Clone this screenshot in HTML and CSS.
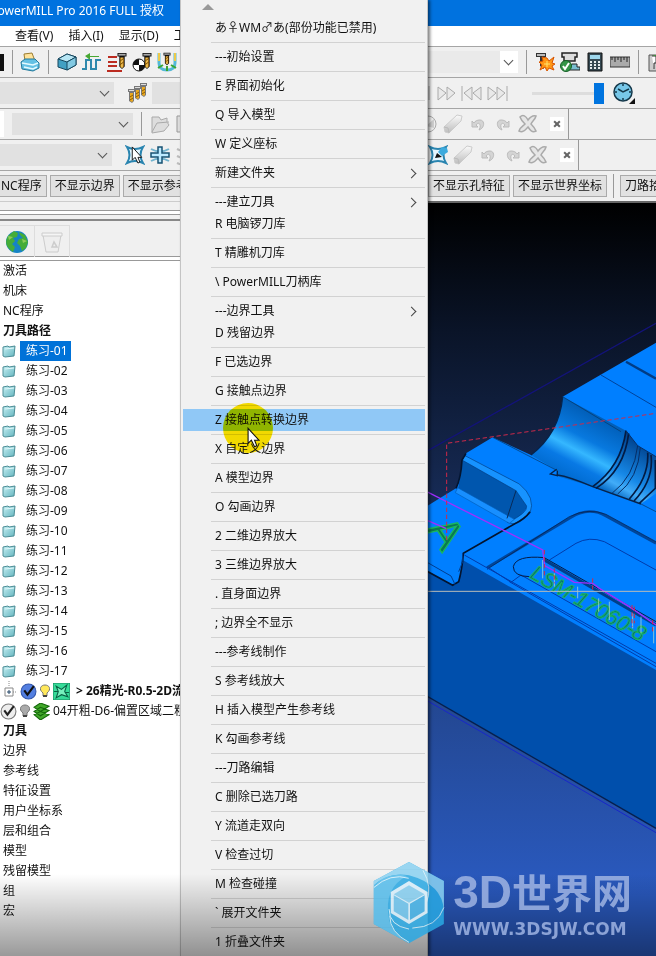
FILE: index.html
```html
<!DOCTYPE html>
<html lang="zh-CN">
<head>
<meta charset="UTF-8">
<meta name="viewport" content="width=device-width, initial-scale=1.0">
<title>PowerMILL Pro 2016 FULL</title>
<link rel="stylesheet" href="styles.css">
</head>
<body>
<!-- shared icons -->
<svg class="defs" aria-hidden="true">
    <defs>
        <linearGradient id="gold" x1="0" x2="1" y1="0" y2="0"><stop offset="0" stop-color="#b87800"/><stop offset=".5" stop-color="#ffd468"/><stop offset="1" stop-color="#a86400"/></linearGradient>
        <linearGradient id="cyan" x1="0" x2="1" y1="0" y2="1"><stop offset="0" stop-color="#c8f0f4"/><stop offset="1" stop-color="#62b4be"/></linearGradient>
        <linearGradient id="steel" x1="0" x2="0" y1="0" y2="1"><stop offset="0" stop-color="#fafafa"/><stop offset="1" stop-color="#bdbdbd"/></linearGradient>
        <symbol id="drill" viewBox="0 0 12 20"><path d="M1 1h10v4H9v11l-3 3-3-3V5H1z" fill="#111"/><path d="M2 2h8v2H2z" fill="#aaa"/><path d="M4 6h4v10l-2 2-2-2z" fill="url(#gold)"/><path d="M4 10l4-3M4 14l4-3" stroke="#6b4300"/></symbol>
        <symbol id="drill-small" viewBox="0 0 9 14"><path d="M1 0h7v3H7v9l-2 2-3-2V3H1z" fill="#777"/><path d="M2 1h5v1H2z" fill="#ddd"/><path d="M3 4h3v8l-1 1-2-1z" fill="#e9a820"/><path d="M3 8l3-2M3 11l3-2" stroke="#8b5b00"/></symbol>
        <symbol id="folder" viewBox="0 0 14 14"><path d="M1 3l5-1 1 1 6-1-1 10-9 1-2-1z" fill="url(#cyan)" stroke="#4c8d96"/><path d="M3 5l9-1" stroke="#dff8fa"/></symbol>
        <symbol id="eraser" viewBox="0 0 20 20"><path d="M1 13L14 1l5 1-1 5L6 19l-4-1z" fill="url(#steel)" stroke="#ccc"/><path d="M1 13l4 1 1 5" fill="none" stroke="#bbb"/></symbol>
        <symbol id="undo" viewBox="0 0 14 14"><path d="M1 4v6h6L5 8c3-4 6 0 3 5 6-2 6-10 1-10-3 0-5 1-6 3z" fill="#d4d4d4" stroke="#bbb"/></symbol>
        <symbol id="cross" viewBox="0 0 20 20"><path d="M2 3c3-3 6-1 8 3 3-4 5-5 8-4-1 4-4 5-5 8 2 2 4 4 5 7-4 2-6-1-8-4-3 3-5 6-9 4 1-4 4-5 6-7-2-2-4-4-5-7z" fill="#e6e6e6" stroke="#aaa" stroke-width="1.5"/></symbol>
        <symbol id="star" viewBox="0 0 20 20"><path d="M2 2q8 4 16 0-5 8 0 16-8-4-16 0 5-8 0-16z" fill="#e4f6ff" stroke="#2a85b0" stroke-width="2"/></symbol>
        <symbol id="bulb" viewBox="0 0 10 14"><path d="M3 9C-2 5 1 1 5 1s7 4 2 8v3H3z" stroke="#777"/><path d="M3 12h4" stroke="#444" stroke-width="2"/></symbol>
        <symbol id="arrow" viewBox="0 0 12 19"><path d="M1 1v14l3-3 3 6 2-1-2-5h4z" fill="#fff" stroke="#111"/></symbol>
    </defs>
</svg>

<div class="app">
    <header class="title-bar"><span class="title">PowerMILL Pro 2016 FULL 授权</span></header>

    <nav class="menu-bar">
        <a href="#">查看(V)</a>
        <a href="#">插入(I)</a>
        <a href="#">显示(D)</a>
        <a href="#">工具(T)</a>
    </nav>

    <div class="toolbar">
        <div class="tools left">
            <span class="swatch"></span>
            <span class="divider print-divider"></span>
            <svg class="icon" viewBox="0 0 20 20"><path d="M5 9L4 2l8-1 3 8z" fill="#ffe39a" stroke="#9c7d31"/><path d="M1 10l4-3h10l4 4v5l-6 3-11-2z" fill="#65c1e4" stroke="#23799b"/><path d="M2 11l11 2 5-2M4 15l9 2 4-2" fill="none" stroke="#e5faff" stroke-width="1.5"/></svg>
            <span class="divider"></span>
            <svg class="icon" viewBox="0 0 20 20"><path d="M1 7l9-5 9 3v8l-9 5-9-3z" fill="#42a0c3" stroke="#17475e"/><path d="M1 7l9-5 9 3-9 5z" fill="#b7e6f4" stroke="#17475e"/><path d="M10 10v8l9-5V5z" fill="#82c9e2" stroke="#17475e"/></svg>
            <svg class="icon" viewBox="0 0 20 20"><path d="M0 17h4V8h5v9h5V8h5" fill="none" stroke="#2e88ac" stroke-width="2"/><path d="M17 4H8V1L3 4l5 4V5h9z" fill="#48a733"/></svg>
            <svg class="icon" viewBox="0 0 20 20"><path d="M1 5h9M1 10h9M1 14h9M0 19h15" stroke="#bb2b20" stroke-width="2"/><use href="#drill" x="9" width="12" height="18"/></svg>
            <svg class="icon" viewBox="0 0 20 20"><circle cx="7" cy="13" r="6" fill="#fff" stroke="#111"/><path d="M7 7v6H1a6 6 0 0 1 6-6zM7 13h6a6 6 0 0 1-6 6z" fill="#111"/><use href="#drill" x="9" width="12" height="18"/></svg>
            <svg class="icon" viewBox="0 0 20 20"><path d="M2 1v10q0 7 8 7t8-7V1" fill="none" stroke="#54b9d6" stroke-width="3"/><path d="M1 16l5-3M19 16l-5-3M10 14v5" stroke="#3da631" stroke-width="2"/><path d="M2 1v8M18 1v8" stroke="#edc94b" stroke-width="2"/><use href="#drill" x="4" width="12" height="14"/></svg>
        </div>
        <div class="tools right">
            <span class="combo wide"><select aria-label="刀具"></select></span>
            <span class="divider"></span>
            <svg class="icon" viewBox="0 0 20 20"><path d="M1 1h10v4H9v12l-4-3V5H1z" fill="#333"/><path d="M2 2h8v2H2z" fill="#bbb"/><path d="M12 6l2 3 5-4-2 6 3 1-3 2 2 4-5-2-2 3-2-4-5 3 2-5-3-3 4-1-1-4z" fill="#ff9817" stroke="#d85400"/><path d="M12 9v6M9 12h6" stroke="#ffe36e"/></svg>
            <svg class="icon" viewBox="0 0 20 20"><path d="M2 1h15v4h-2v4H4V5H2z" fill="#ddd" stroke="#222" stroke-width="1.5"/><path d="M12 12h5v3h3v3H8z" fill="#7abed0" stroke="#222"/><circle cx="6" cy="14" r="5.5" fill="#349447" stroke="#166127"/><path d="M3 14l2 3 4-6" fill="none" stroke="#fff" stroke-width="2"/></svg>
            <svg class="icon" viewBox="0 0 20 20"><path d="M3 1h14v18H3z" fill="#354852" stroke="#111"/><path d="M5 3h10v4H5z" fill="#9ed7ec"/><path d="M5 10h10M5 13h10M5 16h10" stroke="#e7edef" stroke-width="2" stroke-dasharray="2 2"/></svg>
            <svg class="icon" viewBox="0 0 20 20"><path d="M0 5h20v10H0z" fill="#aaa" stroke="#333"/><path d="M2 5v3M5 5v5M8 5v3M11 5v5M14 5v3M17 5v5" stroke="#222"/></svg>
            <span class="divider"></span>
            <svg class="icon" viewBox="0 0 20 20"><path d="M2 3h9v16H2z" fill="#ccc" stroke="#555"/><path d="M5 4h4v7H7v6" fill="#fff" stroke="#333"/><path d="M5 3h8V0l7 4-7 4V5" fill="#3ba132"/></svg>
        </div>
    </div>

    <div class="toolbar">
        <div class="tools left">
            <span class="combo simulate"><select aria-label="刀具路径"></select></span>
            <svg class="icon multi" viewBox="0 0 20 20"><use href="#drill-small" y="6" width="9" height="14"/><use href="#drill-small" x="6" y="3" width="9" height="14"/><use href="#drill-small" x="12" width="9" height="14"/></svg>
            <span class="combo fill"><select aria-label="模式"></select></span>
        </div>
        <div class="tools right">
            <svg class="playback" viewBox="0 0 80 20" fill="#e9e9e9" stroke="#aaa"><path d="M1 3v14M10 4v13l8-7zM19 4v13l8-7zM34 3v15M44 4v13l-8-7zM53 4v13l-8-7zM60 4v13l8-7zM69 4v13l8-7zM79 3v15"/></svg>
            <input class="speed" type="range" value="100" aria-label="仿真速度">
            <svg class="icon clock" viewBox="0 0 22 22"><circle cx="10" cy="10" r="9" fill="#77c7e8" stroke="#15384a" stroke-width="1.5"/><path d="M5 7l5 3 6-3M10 2v2M10 16v2M2 10h2M16 10h2" fill="none" stroke="#15384a" stroke-width="1.5"/><path d="M22 16v6h-6z" fill="#111"/></svg>
        </div>
    </div>

    <div class="toolbar">
        <div class="tools left">
            <span class="white-edge"></span>
            <span class="combo boundary"><select aria-label="边界"></select></span>
            <span class="divider"></span>
            <svg class="icon" viewBox="0 0 20 20" fill="#ddd" stroke="#aaa"><path d="M2 3h7l2 3 6-2v4l2 3-5 6-12 2z"/><path d="M2 18l5-9 12-1"/></svg>
            <svg class="icon" viewBox="0 0 20 20" fill="#ddd" stroke="#999"><path d="M2 2h16v16H2zM6 2v16"/></svg>
        </div>
        <div class="tools right edit-bar">
            <svg class="icon half" viewBox="10 0 10 20"><circle cx="10" cy="10" r="8" fill="#eee" stroke="#aaa"/><path d="M8 12l8-7v9z" fill="#ccc"/></svg>
            <svg class="icon"><use href="#eraser"/></svg>
            <svg class="icon turn"><use href="#undo"/></svg>
            <svg class="icon turn redo"><use href="#undo"/></svg>
            <svg class="icon"><use href="#cross"/></svg>
            <button class="close" aria-label="关闭"></button>
        </div>
    </div>

    <div class="toolbar">
        <div class="tools left">
            <span class="combo pattern"><select aria-label="参考线"></select></span>
            <svg class="icon" viewBox="0 0 20 20"><use href="#star" width="20" height="20"/><use href="#arrow" x="6" y="1" width="12" height="18"/></svg>
            <svg class="icon" viewBox="0 0 20 20"><path d="M1 4q9 5 18 0M1 16q9-5 18 0" fill="none" stroke="#71b3ce" stroke-width="2"/><path d="M8 2h4v6h7v4h-7v6H8v-6H1V8h7z" fill="#bdeaff" stroke="#175273" stroke-width="1.5"/></svg>
            <svg class="icon" viewBox="0 0 20 20" fill="none" stroke="#bbb" stroke-width="2"><path d="M2 4q8 4 18 0M2 11q8 4 18 0M2 18q8 4 18 0"/></svg>
        </div>
        <div class="tools right edit-bar">
            <svg class="icon" viewBox="0 0 20 20"><use href="#star" width="20" height="20"/><path d="M7 13l2-5 5 4z" fill="#111"/><path d="M10 7l4-5 5 1 1 4-6 4z" fill="#3caadd"/></svg>
            <svg class="icon"><use href="#eraser"/></svg>
            <svg class="icon turn"><use href="#undo"/></svg>
            <svg class="icon turn redo"><use href="#undo"/></svg>
            <svg class="icon"><use href="#cross"/></svg>
            <button class="close" aria-label="关闭"></button>
        </div>
    </div>

    <div class="toolbar macros">
        <div class="tools left">
            <button class="macro">NC程序</button>
            <button class="macro">不显示边界</button>
            <button class="macro">不显示参考线</button>
        </div>
        <div class="tools right">
            <button class="macro">不显示孔特征</button>
            <button class="macro">不显示世界坐标</button>
            <span class="divider"></span>
            <button class="macro">刀路拾取</button>
        </div>
    </div>

    <main class="workspace">
        <aside class="explorer">
            <div class="grip"></div>
            <div class="tabs">
                <button class="tab" aria-label="浏览器"><svg viewBox="0 0 24 24"><circle cx="12" cy="12" r="11" fill="#1683c5"/><path d="M3 6l6-5 4 2-1 4-4 1 2 3-3 3 3 3-2 5C0 17 0 11 3 6zM14 2l6 3 3 7-2 6-4 3-2-5-3-3 2-4 4-1-3-3z" fill="#45ad38"/><path d="M3 6l5 1-4 3zM17 9l5 2-4 2z" fill="#8ccd58"/></svg></button>
                <button class="tab" aria-label="回收站"><svg viewBox="0 0 24 24"><path d="M3 5l3 17h12l3-17z" fill="#eee" stroke="#ccc"/><path d="M2 3h20v3H2z" fill="#f5f5f5" stroke="#ccc"/><path d="M12 17l2-5 3 5z" fill="none" stroke="#ccc" stroke-width="1.5"/></svg></button>
            </div>
            <ul class="tree">
                <li>激活</li>
                <li>机床</li>
                <li>NC程序</li>
                <li class="bold">刀具路径</li>
                <li class="folder"><svg><use href="#folder"/></svg><span class="selected">练习-01</span></li>
                <li class="folder"><svg><use href="#folder"/></svg><span>练习-02</span></li>
                <li class="folder"><svg><use href="#folder"/></svg><span>练习-03</span></li>
                <li class="folder"><svg><use href="#folder"/></svg><span>练习-04</span></li>
                <li class="folder"><svg><use href="#folder"/></svg><span>练习-05</span></li>
                <li class="folder"><svg><use href="#folder"/></svg><span>练习-06</span></li>
                <li class="folder"><svg><use href="#folder"/></svg><span>练习-07</span></li>
                <li class="folder"><svg><use href="#folder"/></svg><span>练习-08</span></li>
                <li class="folder"><svg><use href="#folder"/></svg><span>练习-09</span></li>
                <li class="folder"><svg><use href="#folder"/></svg><span>练习-10</span></li>
                <li class="folder"><svg><use href="#folder"/></svg><span>练习-11</span></li>
                <li class="folder"><svg><use href="#folder"/></svg><span>练习-12</span></li>
                <li class="folder"><svg><use href="#folder"/></svg><span>练习-13</span></li>
                <li class="folder"><svg><use href="#folder"/></svg><span>练习-14</span></li>
                <li class="folder"><svg><use href="#folder"/></svg><span>练习-15</span></li>
                <li class="folder"><svg><use href="#folder"/></svg><span>练习-16</span></li>
                <li class="folder"><svg><use href="#folder"/></svg><span>练习-17</span></li>
                <li class="path active">
                    <svg class="expand" viewBox="0 0 13 20"><path d="M5 0v6M9 11h4" stroke="#888" stroke-dasharray="1 1"/><path d="M1 7h8v8H1z" fill="#fff" stroke="#888"/><path d="M3 11h4M5 9v4" stroke="#246"/></svg>
                    <svg class="state" viewBox="0 0 16 16"><circle cx="8" cy="8" r="7" fill="#537fe1" stroke="#3156ac"/><path d="M4 7l3 4 6-8" fill="none" stroke="#111" stroke-width="2"/></svg>
                    <svg class="bulb" fill="#ffe85b"><use href="#bulb"/></svg>
                    <svg class="state" viewBox="0 0 16 16"><path d="M0 0h16v16H0z" fill="#36db99" stroke="#17885f"/><path d="M3 3l5 3 5-4-2 6 3 5-6-2-5 3 2-6zM1 8h4M11 9h4" fill="#76f0bd" stroke="#075f43"/></svg>
                    <span class="bold">&gt; 26精光-R0.5-2D流道</span>
                </li>
                <li class="path">
                    <svg class="state" viewBox="0 0 16 16"><circle cx="8" cy="8" r="7" fill="#eee" stroke="#777"/><path d="M4 7l3 4 6-8" fill="none" stroke="#222" stroke-width="2"/></svg>
                    <svg class="bulb" fill="#aaa"><use href="#bulb"/></svg>
                    <svg class="state" viewBox="0 0 16 16" fill="#42a82a" stroke="#14680b"><path d="M1 11l6-3 8 3-8 5zM1 8l6-4 8 3-8 5zM1 4l6-4 8 3-8 5z"/></svg>
                    <span>04开粗-D6-偏置区域二粗</span>
                </li>
                <li class="bold">刀具</li>
                <li>边界</li>
                <li>参考线</li>
                <li>特征设置</li>
                <li>用户坐标系</li>
                <li>层和组合</li>
                <li>模型</li>
                <li>残留模型</li>
                <li>组</li>
                <li>宏</li>
            </ul>
        </aside>

        <section class="view">
            <svg class="model" viewBox="6 -381 684 2259" preserveAspectRatio="xMinYMin slice">
                <defs>
                    <linearGradient id="bore" gradientUnits="userSpaceOnUse" x1="500" y1="240" x2="400" y2="430"><stop offset="0" stop-color="#005bb4"/><stop offset=".4" stop-color="#0879df"/><stop offset=".6" stop-color="#35b7ff"/><stop offset=".78" stop-color="#0879e5"/><stop offset="1" stop-color="#006bd0"/></linearGradient>
                    <linearGradient id="ring" gradientUnits="userSpaceOnUse" x1="670" y1="350" x2="580" y2="510"><stop offset="0" stop-color="#00418c"/><stop offset=".6" stop-color="#1688e7"/><stop offset=".8" stop-color="#42acf8"/><stop offset="1" stop-color="#0063c0"/></linearGradient>
                </defs>
                <path d="M0 365L690-20" stroke="#13137a" stroke-width="4"/>
                <!-- side wall -->
                <path d="M0 700L110 670 690 1000V1495L0 1097z" fill="#004fac"/>
                <path d="M0 1097L690 1495" stroke="#06204e" stroke-width="4"/>
                <path d="M0 1110L690 1508" stroke="#1827c9" stroke-width="3"/>
                <!-- top face -->
                <path d="M0 530L90 475Q105 445 108 390L120 370 200 322 315 375Q400 310 410 200L690 38V1020L110 690Q104 720 98 755L80 766 0 722z" fill="#007fff"/>
                <path d="M108 385L270 470Q300 500 302 535L265 577 240 572 96 480Q106 430 108 385z" fill="#0056ae"/>
                <path d="M115 376L280 462Q330 503 312 550L265 582 244 577Q305 550 302 528L270 482 108 390z" fill="#1793ff" stroke="#003d80" stroke-width="2"/>
                <path d="M95 473L265 568 250 580 88 488z" fill="#188fff" stroke="#005dba" stroke-width="2"/>
                <path d="M270 482L243 565" stroke="#082b57" stroke-width="3"/>
                <path d="M90 475Q105 445 108 390L120 370M312 545Q297 567 265 582L112 670Q108 720 98 755L80 766 0 722" fill="none" stroke="#03142f" stroke-width="5"/>
                <path d="M0 695L75 738 88 765M110 670V695L98 725" fill="none" stroke="#003e91" stroke-width="3"/>
                <!-- runner bore -->
                <path d="M315 375Q400 310 410 200L600 302Q585 410 500 470L390 437 394 422z" fill="url(#bore)"/>
                <path d="M600 302L635 347 690 380V490L645 522 500 470Q580 410 600 302z" fill="url(#ring)"/>
                <path d="M315 375Q400 310 410 200M394 422V437L373 432 392 418M394 435Q430 440 500 470L645 522" fill="none" stroke="#06234b" stroke-width="4"/>
                <path d="M200 322L394 422M645 522L690 545M410 200L585 305" fill="none" stroke="#06335f" stroke-width="2"/>
                <path d="M600 302Q585 410 500 470M608 310Q595 420 510 475M665 368Q670 440 610 507M675 375Q684 450 624 513M688 390V475L640 520" fill="none" stroke="#031b43" stroke-width="5"/>
                <path d="M600 302L635 347 690 380M635 347Q625 440 558 490M643 352Q637 445 575 492" fill="none" stroke="#062e66" stroke-width="3"/>
                <path d="M525 135L690 232" stroke="#00439a" stroke-width="3"/>
                <path d="M600 95L690 146" stroke="#003c85" stroke-width="7"/>
                <!-- pocket -->
                <path d="M183 713L430 565Q487 528 540 558L690 640" fill="none" stroke="#00469a" stroke-width="8"/>
                <path d="M183 718L430 560Q487 532 540 553L690 635" fill="none" stroke="#071d46" stroke-width="2"/>
                <path d="M370 690L450 640Q490 618 535 635L690 720M183 710L255 757 285 735 690 965M115 675L690 1000M250 755L690 1010" fill="none" stroke="#003cab" stroke-width="3"/>
                <path d="M355 690L690 885" stroke="#003e89" stroke-width="9"/>
                <path d="M310 740Q262 739 262 710 270 675 355 683L690 875" fill="none" stroke="#061b45" stroke-width="3"/>
                <!-- engraving -->
                <text class="engrave letter" transform="translate(0 598) rotate(56)">A</text>
                <text class="engrave" transform="translate(308 742) rotate(30)">LSM-17060-8</text>
                <path d="M350 690V745M385 730V770M455 770V805M518 805V845M550 815V870M620 850V895M645 860V910M683 890V940" stroke="#c7e8c8" stroke-width="2"/>
                <path d="M0 484L350 660 356 707 445 757 500 760 520 775 610 830 690 885M0 570L60 595" fill="none" stroke="#a12eff" stroke-width="4"/>
                <path d="M62 630V340L690 250M355 660V740M385 715V760M500 745V780M618 825V890M625 830V880M680 870V910" fill="none" stroke="#ce294a" stroke-width="3" stroke-dasharray="13 8"/>
                <path d="M0 784H690" stroke="#b8bcb8" stroke-width="3"/>
            </svg>
        </section>
    </main>

    <!-- user macro menu, opened over everything -->
    <div class="popup" role="menu">
        <div class="scroll-up"></div>
        <button role="menuitem">あ♀WM♂あ(部份功能已禁用)</button><hr>
        <button role="menuitem">---初始设置</button><hr>
        <button role="menuitem">E 界面初始化</button><hr>
        <button role="menuitem">Q 导入模型</button><hr>
        <button role="menuitem">W 定义座标</button><hr>
        <button role="menuitem" class="sub">新建文件夹</button><hr>
        <button role="menuitem" class="sub">---建立刀具</button>
        <button role="menuitem">R 电脑锣刀库</button><hr>
        <button role="menuitem">T 精雕机刀库</button><hr>
        <button role="menuitem">\ PowerMILL刀柄库</button><hr>
        <button role="menuitem" class="sub">---边界工具</button>
        <button role="menuitem">D 残留边界</button><hr>
        <button role="menuitem">F 已选边界</button><hr>
        <button role="menuitem">G 接触点边界</button><hr>
        <button role="menuitem" class="hover">Z 接触点转换边界
            <span class="spot"></span>
            <svg class="pointer"><use href="#arrow"/></svg>
        </button><hr>
        <button role="menuitem">X 自定义边界</button><hr>
        <button role="menuitem">A 模型边界</button><hr>
        <button role="menuitem">O 勾画边界</button><hr>
        <button role="menuitem">2 二维边界放大</button><hr>
        <button role="menuitem">3 三维边界放大</button><hr>
        <button role="menuitem">. 直身面边界</button><hr>
        <button role="menuitem">; 边界全不显示</button><hr>
        <button role="menuitem">---参考线制作</button><hr>
        <button role="menuitem">S 参考线放大</button><hr>
        <button role="menuitem">H 插入模型产生参考线</button><hr>
        <button role="menuitem">K 勾画参考线</button><hr>
        <button role="menuitem">---刀路编辑</button><hr>
        <button role="menuitem">C 删除已选刀路</button><hr>
        <button role="menuitem">Y 流道走双向</button><hr>
        <button role="menuitem">V 检查过切</button><hr>
        <button role="menuitem">M 检查碰撞</button><hr>
        <button role="menuitem">` 展开文件夹</button><hr>
        <button role="menuitem">1 折叠文件夹</button>
    </div>

    <div class="shade"></div>
    <div class="brand">
        <svg viewBox="40 660 216 250">
            <path d="M148 663l105 57v130l-105 58-106-58V720z" fill="#2aa9e4"/>
            <path d="M148 663l105 57v90q-4-80-105-107-60-12-106 30v-13z" fill="#8bd2f2"/>
            <path d="M42 850V735q45-44 100-30-70 35-55 125 5 40 61 78z" fill="#55bdec"/>
            <path d="M42 740q50-45 105-28M190 688q30 50 10 100M253 800q-20 60-95 62M148 865q-60-10-60-60M90 825q0 50 58 80" fill="none" stroke="#d2effb" stroke-width="3"/>
            <path d="M148 720l56 33v64l-56 33-55-33v-64z" fill="#d9effb"/>
            <path d="M148 733l47 27-47 26-46-26z" fill="#84cdef"/>
            <path d="M102 763l44 26v49l-44-27z" fill="#6bc2ec"/>
            <path d="M195 763l-44 26v49l44-27z" fill="#3faee5"/>
        </svg>
        <div>
            <div class="brand-name"><span>3D</span>世界网</div>
            <div class="brand-url">WWW.3DSJW.COM</div>
        </div>
    </div>
</div>
</body>
</html>
```
FILE: styles.css
```css
* {
    box-sizing: border-box;
}
body {
    margin: 0;
    font-family: "Noto Sans", "Noto Sans CJK SC", sans-serif;
    font-size: 12px;
    color: #111;
}
button, select {
    font: inherit;
    color: inherit;
}
.defs {
    position: absolute;
    width: 0;
    height: 0;
}
.app {
    position: relative;
    display: flex;
    flex-direction: column;
    height: 100vh;
    overflow: hidden;
    background: #f0f0f0;
}

/* Title and menu bar */
.title-bar {
    height: 26px;
    background: #0072df;
    color: #fff;
}
.title {
    display: flex;
    justify-content: flex-end;
    width: 164px;
    line-height: 22px;
    white-space: nowrap;
}
.menu-bar {
    display: flex;
    gap: 15px;
    height: 20px;
    padding-left: 15px;
    background: #fff;
    line-height: 20px;
}
.menu-bar a {
    color: #111;
    text-decoration: none;
}

/* Toolbars */
.toolbar {
    display: flex;
    flex: none;
    gap: 248px;
    height: 31px;
    border-top: 1px solid #a5a5a5;
}
.tools {
    display: flex;
    align-items: center;
    gap: 5px;
    overflow: hidden;
}
.left {
    flex: 0 0 180px;
}
.right {
    flex: 1;
}
.icon {
    flex: none;
    width: 20px;
    height: 20px;
}
.divider {
    flex: none;
    width: 1px;
    height: 24px;
    margin: 0 3px;
    background: #999;
}
.swatch {
    flex: none;
    width: 4px;
    height: 17px;
    background: #111;
}
.print-divider {
    margin-right: 2px;
}
.combo {
    position: relative;
    flex: none;
    height: 22px;
}
.combo select {
    width: 100%;
    height: 100%;
    border: 0;
    appearance: none;
    background: #e1e1e1;
}
.combo::after {
    content: "";
    position: absolute;
    top: 6px;
    right: 6px;
    width: 6px;
    height: 6px;
    border: solid #555;
    border-width: 0 1px 1px 0;
    transform: rotate(45deg);
}
.wide {
    width: 90px;
}
.wide select {
    background: linear-gradient(to left, #fff 18px, #eaeaea 18px);
}
.simulate {
    width: 114px;
    margin-right: 8px;
}
.fill {
    width: 60px;
}
.boundary {
    width: 121px;
    margin-left: 3px;
}
.white-edge {
    flex: none;
    width: 4px;
    height: 26px;
    background: #fff;
}
.pattern {
    width: 112px;
    margin-right: 8px;
}
.playback {
    flex: none;
    width: 80px;
    height: 20px;
}
.speed {
    width: 72px;
    height: 22px;
    margin: 0 4px 0 19px;
    appearance: none;
    background: linear-gradient(#ddd, #ddd) center / 100% 3px no-repeat;
}
.speed::-webkit-slider-thumb {
    width: 10px;
    height: 21px;
    appearance: none;
    background: #0074df;
}
.clock {
    width: 22px;
    height: 22px;
}
.edit-bar {
    flex: none;
    padding-right: 4px;
    border-right: 1px solid #999;
}
.half {
    width: 10px;
}
.turn {
    width: 14px;
    height: 14px;
    margin: 0 3px;
}
.redo {
    transform: scaleX(-1);
}
.close {
    position: relative;
    width: 14px;
    height: 14px;
    margin-left: 7px;
    padding: 0;
    border: 0;
    background: #fff;
}
.close::before, .close::after {
    content: "";
    position: absolute;
    top: 6px;
    left: 3px;
    width: 8px;
    height: 2px;
    background: #666;
    transform: rotate(45deg);
}
.close::after {
    transform: rotate(-45deg);
}
.macros .tools {
    gap: 3px;
}
.macros .left .macro:first-child {
    margin-left: -4px;
}
.macro {
    flex: none;
    height: 22px;
    padding: 0 4px;
    border: 1px solid #aaa;
    background: #e1e1e1;
    line-height: 20px;
    white-space: nowrap;
}

/* Explorer */
.workspace {
    display: flex;
    flex: 1;
    min-height: 0;
    gap: 248px;
}
.explorer {
    flex: 0 0 180px;
    overflow: hidden;
    background: #fff;
}
.grip {
    height: 20px;
    border-top: 1px solid #ccc;
    border-bottom: 2px solid #888;
    background: linear-gradient(#f0f0f0 8px, #999 8px, #999 9px, #fff 9px, #fff 12px, #999 12px, #999 13px, #f0f0f0 13px);
}
.tabs {
    display: flex;
    height: 40px;
    padding-top: 4px;
    border-bottom: 1px solid #999;
    box-shadow: inset 0 -3px #fff, inset 0 -4px #999;
    background: #f0f0f0;
}
.tab {
    width: 35px;
    height: 32px;
    padding: 4px 5px;
    border: solid #ddd;
    border-width: 1px 1px 0 0;
    background: none;
}
.tab svg {
    width: 24px;
    height: 24px;
}
.tree {
    margin: 0;
    padding: 0;
    list-style: none;
    line-height: 20px;
    white-space: nowrap;
}
.tree li {
    display: flex;
    align-items: center;
    height: 20px;
    padding-left: 3px;
}
.tree svg {
    flex: none;
}
.tree .folder {
    padding-left: 2px;
}
.tree .folder svg {
    width: 14px;
    height: 14px;
    margin-right: 4px;
}
.folder span {
    padding: 0 3px 0 6px;
}
.folder .selected {
    background: #0072d8;
    color: #fff;
}
.bold {
    font-weight: bold;
}
.tree .path {
    gap: 3px;
    padding-left: 0;
}
.tree .active {
    padding-left: 4px;
}
.expand {
    width: 13px;
    height: 20px;
}
.state {
    width: 17px;
    height: 17px;
}
.path .bulb {
    width: 10px;
    height: 14px;
}
.path .bold {
    margin-left: 3px;
}

/* 3D view */
.view {
    flex: 1;
    overflow: hidden;
    border-top: 2px solid #666;
    background: linear-gradient(#000, #0a1428 17%, #14264c 35%, #234791 66%, #2a5ac0 92%);
}
.model {
    display: block;
    width: 100%;
    height: 100%;
}
.engrave {
    fill: #0a5f78;
    stroke: #18b860;
    stroke-width: 3px;
    font-family: "Liberation Sans", sans-serif;
    font-size: 64px;
    font-style: italic;
}
.letter {
    fill: #0b7a50;
    stroke-width: 4px;
    font-size: 130px;
    font-style: normal;
}

/* Popup menu */
.popup {
    position: absolute;
    top: 0;
    bottom: 0;
    left: 180px;
    width: 248px;
    padding: 0 2px;
    overflow: hidden;
    border: solid #c4c4c4;
    border-width: 0 1px;
    background: #f1f1f1;
    box-shadow: 2px 0 3px rgba(0, 0, 0, 0.5);
}
.scroll-up {
    height: 17px;
    padding: 4px 19px;
}
.scroll-up::before {
    content: "";
    display: block;
    width: 0;
    border: solid transparent;
    border-width: 0 6px 6px;
    border-bottom-color: #999;
}
.popup button {
    position: relative;
    display: block;
    width: 100%;
    height: 22px;
    padding: 0 0 0 32px;
    border: 0;
    background: none;
    line-height: 22px;
    text-align: left;
    white-space: nowrap;
}
.popup hr {
    height: 1px;
    margin: 3px 0 3px 28px;
    border: 0;
    background: #d2d2d2;
}
.popup .hover {
    background: #90c8f6;
}
.sub::after {
    content: "";
    position: absolute;
    top: 8px;
    right: 10px;
    width: 6px;
    height: 6px;
    border: solid #444;
    border-width: 1px 1px 0 0;
    transform: rotate(45deg);
}
.spot {
    position: absolute;
    top: -6px;
    left: 40px;
    width: 50px;
    height: 50px;
    border-radius: 50%;
    background: #ffe600;
    mix-blend-mode: multiply;
}
.pointer {
    position: absolute;
    z-index: 1;
    top: 18px;
    left: 64px;
    width: 13px;
    height: 21px;
}

/* Overlay at the bottom */
.shade {
    position: absolute;
    right: 0;
    bottom: 0;
    left: 0;
    height: 82px;
    background: linear-gradient(transparent, rgba(0, 0, 0, 0.4));
    pointer-events: none;
}
.brand {
    position: absolute;
    right: 24px;
    bottom: 12px;
    display: flex;
    align-items: center;
    gap: 8px;
    color: #9fb4e3;
    opacity: 0.85;
}
.brand svg {
    width: 72px;
    height: 83px;
}
.brand-name {
    font-family: "Liberation Sans", "Noto Sans CJK SC", sans-serif;
    font-size: 40px;
    font-weight: bold;
    line-height: 50px;
    white-space: nowrap;
}
.brand-name span {
    font-size: 46px;
}
.brand-url {
    font-family: "DejaVu Sans", sans-serif;
    font-size: 17px;
    font-weight: bold;
    line-height: 20px;
}
```
